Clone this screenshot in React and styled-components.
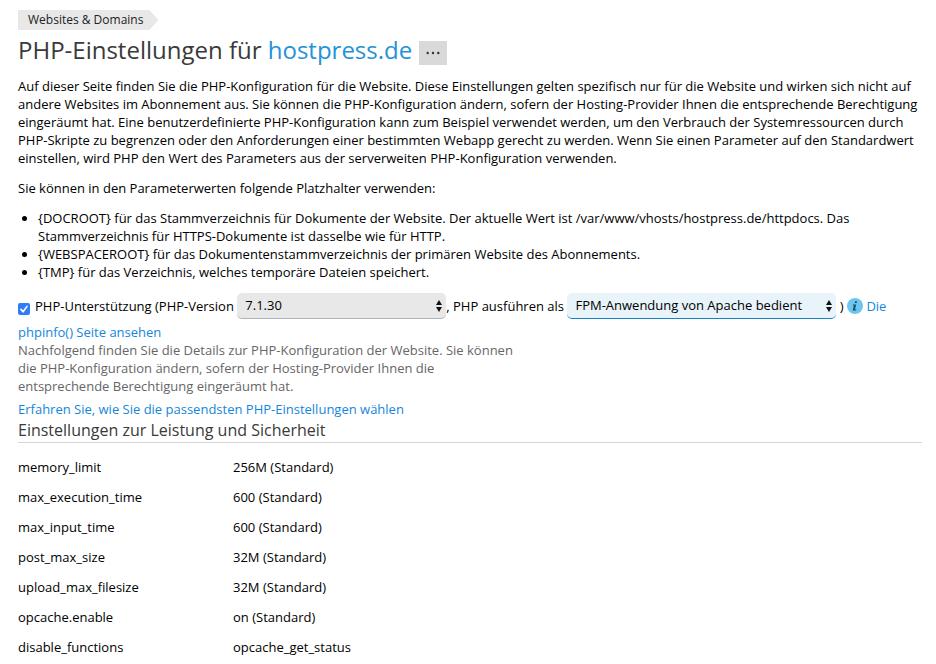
import React from 'react';
import styled, { createGlobalStyle } from 'styled-components';

const GlobalStyle = createGlobalStyle`
  body {
    margin: 0;
    background: #fff;
    color: #000;
    font-family: "Open Sans", "Noto Sans", sans-serif;
    font-size: 13px;
    line-height: 18px;
  }
`;

const Page = styled.main`
  padding: 10px 14px 0 18px;
`;

const Breadcrumbs = styled.nav`
  display: flex;
`;

const Crumb = styled.a`
  padding: 0 15px 0 10px;
  background: #e8e8e8;
  clip-path: polygon(0 0, calc(100% - 9px) 0, 100% 50%, calc(100% - 9px) 100%, 0 100%);
  color: #222;
  font-size: 12px;
  line-height: 20px;
  text-decoration: none;
`;

const Link = styled.a`
  color: #1486dc;
  text-decoration: none;

  &:hover {
    text-decoration: underline;
  }
`;

const TitleBar = styled.div`
  display: flex;
  align-items: flex-start;
  gap: 7px;
  padding-bottom: 7px;
`;

const Title = styled.h1`
  margin: 0;
  color: #3a3a3a;
  font-size: 24px;
  font-weight: 400;
  line-height: 40px;

  a {
    color: #2492d8;
  }
`;

const MoreButton = styled.button`
  display: flex;
  align-items: center;
  justify-content: center;
  width: 28px;
  height: 24px;
  margin-top: 11px;
  padding: 0;
  border: 0;
  background: #d9d9d9;
  color: #333;
  cursor: pointer;
`;

const Text = styled.p`
  margin: 0 0 12px;
`;

const Placeholders = styled.ul`
  margin: 0 0 12px;
  padding: 0 0 0 20px;
`;

const Placeholder = styled.li`
  padding-right: 40px;
`;

const Support = styled.div`
  line-height: 18px;
`;

const Checkbox = styled.input`
  width: 12px;
  height: 12px;
  margin: 0 5px 0 0;
  appearance: none;
  border-radius: 2px;
  background: #2f7cf6;
  background-image: url("data:image/svg+xml,%3Csvg xmlns='http://www.w3.org/2000/svg' viewBox='0 0 12 12'%3E%3Cpath d='M3 6.4 5.1 8.8 9 3.4' fill='none' stroke='white' stroke-width='1.6' stroke-linecap='round' stroke-linejoin='round'/%3E%3C/svg%3E");
  vertical-align: -4px;

  &:not(:checked) {
    background: #fff;
    box-shadow: inset 0 0 0 1px #999;
  }
`;

const SelectBox = styled.span`
  display: inline-grid;
  align-items: center;
  width: ${({ $width }) => $width}px;
  margin-bottom: 4px;
  vertical-align: middle;

  > * {
    grid-area: 1 / 1;
  }

  svg {
    justify-self: end;
    margin-right: 3px;
    pointer-events: none;
  }
`;

const Select = styled.select`
  width: 100%;
  height: 26px;
  padding: 0 20px 1px 8px;
  appearance: none;
  border: 0;
  border-bottom: 1px solid ${({ $active }) => ($active ? '#1583c7' : '#a9b4bd')};
  border-radius: 5px;
  background: ${({ $active }) => ($active ? '#e8f3fa' : '#e8e8e8')};
  color: #000;
  font: inherit;
  outline: 0;
`;

const InfoIcon = styled.svg`
  width: 16px;
  height: 16px;
  vertical-align: -3px;
`;

const Hint = styled.p`
  max-width: 500px;
  margin: 0 0 5px;
  color: #666;
`;

const SectionTitle = styled.h2`
  margin: 0 0 9px;
  border-bottom: 1px solid #d5d5d5;
  color: #3a3a3a;
  font-size: 16px;
  font-weight: 400;
  line-height: 24px;
`;

const Settings = styled.table`
  width: 100%;
  border-collapse: collapse;
  table-layout: fixed;

  th,
  td {
    padding: 6px 0;
    font-weight: 400;
    text-align: left;
  }

  th {
    width: 215px;
  }
`;

const settings = [
  ['memory_limit', '256M (Standard)'],
  ['max_execution_time', '600 (Standard)'],
  ['max_input_time', '600 (Standard)'],
  ['post_max_size', '32M (Standard)'],
  ['upload_max_filesize', '32M (Standard)'],
  ['opcache.enable', 'on (Standard)'],
  ['disable_functions', 'opcache_get_status'],
];

const Dropdown = ({
  id, label, option, width, active,
}) => (
  <SelectBox $width={width}>
    <Select id={id} aria-label={label} $active={active}>
      <option>{option}</option>
    </Select>
    <svg width="8" height="12" viewBox="0 0 8 12" aria-hidden="true">
      <path d="M4 0 7 5H1ZM4 12 1 7h6Z" fill="#111" />
    </svg>
  </SelectBox>
);

const App = () => (
  <>
    <GlobalStyle />
    <Page>
      <Breadcrumbs>
        <Crumb href="#domains">Websites &amp; Domains</Crumb>
      </Breadcrumbs>
      <TitleBar>
        <Title>
          PHP-Einstellungen für
          {' '}
          <Link href="#hostpress">hostpress.de</Link>
        </Title>
        <MoreButton type="button" aria-label="Mehr">
          <svg width="14" height="4" viewBox="0 0 14 4" fill="currentColor">
            <circle cx="1.7" cy="2" r="1.2" />
            <circle cx="7" cy="2" r="1.2" />
            <circle cx="12.3" cy="2" r="1.2" />
          </svg>
        </MoreButton>
      </TitleBar>
      <Text>
        Auf dieser Seite finden Sie die PHP-Konfiguration für die Website. Diese Einstellungen
        gelten spezifisch nur für die Website und wirken sich nicht auf andere Websites im
        Abonnement aus. Sie können die PHP-Konfiguration ändern, sofern der Hosting-Provider Ihnen
        die entsprechende Berechtigung eingeräumt hat. Eine benutzerdefinierte PHP-Konfiguration
        kann zum Beispiel verwendet werden, um den Verbrauch der Systemressourcen durch
        PHP-Skripte zu begrenzen oder den Anforderungen einer bestimmten Webapp gerecht zu werden.
        Wenn Sie einen Parameter auf den Standardwert einstellen, wird PHP den Wert des Parameters
        aus der serverweiten PHP-Konfiguration verwenden.
      </Text>
      <Text>Sie können in den Parameterwerten folgende Platzhalter verwenden:</Text>
      <Placeholders>
        <Placeholder>
          {'{DOCROOT} für das Stammverzeichnis für Dokumente der Website. Der aktuelle Wert ist /var/www/vhosts/hostpress.de/httpdocs. Das Stammverzeichnis für HTTPS-Dokumente ist dasselbe wie für HTTP.'}
        </Placeholder>
        <Placeholder>
          {'{WEBSPACEROOT} für das Dokumentenstammverzeichnis der primären Website des Abonnements.'}
        </Placeholder>
        <Placeholder>
          {'{TMP} für das Verzeichnis, welches temporäre Dateien speichert.'}
        </Placeholder>
      </Placeholders>
      <Support>
        <Checkbox type="checkbox" id="php-support" defaultChecked />
        <label htmlFor="php-support">PHP-Unterstützung (PHP-Version</label>
        {' '}
        <Dropdown id="php-version" label="PHP-Version" option="7.1.30" width={209} />
        {', '}
        <label htmlFor="php-handler">PHP ausführen als</label>
        {' '}
        <Dropdown
          id="php-handler"
          label="PHP ausführen als"
          option="FPM-Anwendung von Apache bedient"
          width={269}
          active
        />
        {' ) '}
        <InfoIcon viewBox="0 0 16 16" aria-hidden="true">
          <circle cx="8" cy="8" r="8" fill="#6ec6ee" />
          <path d="M6 6.6h3.2L8 11.4h1.4l-.3 1H5.7l1.2-4.8H5.8ZM8.1 3.2h2L9.6 5h-2Z" fill="#17506e" />
        </InfoIcon>
        {' '}
        <Link href="#phpinfo">Die phpinfo() Seite ansehen</Link>
      </Support>
      <Hint>
        Nachfolgend finden Sie die Details zur PHP-Konfiguration der Website. Sie können die
        PHP-Konfiguration ändern, sofern der Hosting-Provider Ihnen die entsprechende
        Berechtigung eingeräumt hat.
      </Hint>
      <Link href="#learn">Erfahren Sie, wie Sie die passendsten PHP-Einstellungen wählen</Link>
      <SectionTitle>Einstellungen zur Leistung und Sicherheit</SectionTitle>
      <Settings>
        <tbody>
          {settings.map(([name, value]) => (
            <tr key={name}>
              <th scope="row">{name}</th>
              <td>{value}</td>
            </tr>
          ))}
        </tbody>
      </Settings>
    </Page>
  </>
);

export default App;
